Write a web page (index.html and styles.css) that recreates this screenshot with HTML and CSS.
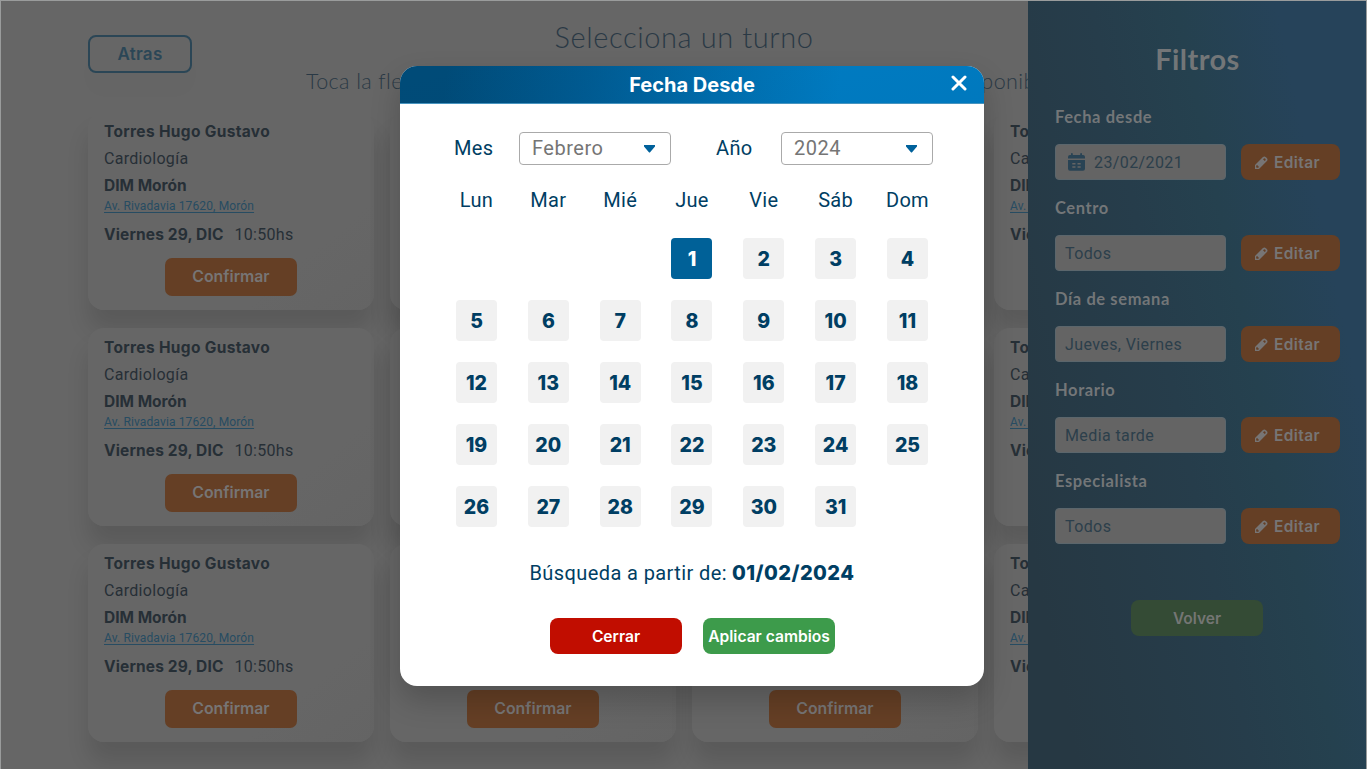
FILE: index.html
```html
<!DOCTYPE html>
<html lang="es">
<head>
<meta charset="utf-8">
<title>Selecciona un turno</title>
<link rel="stylesheet" href="styles.css">
</head>
<body>
<svg width="0" height="0" class="sprite" aria-hidden="true">
  <symbol id="pencil" viewBox="0 0 13 13">
    <path fill-rule="evenodd" d="M0 13V9L7.7 1.3Q9.300-.3 10.900 1.200L11.800 2.100Q13.300 3.700 11.700 5.300L4 13ZM8.600 2.700L8 3.300L9.700 5L10.300 4.400Q11.100 3.600 10.300 2.700Q9.500 1.900 8.600 2.700ZM1.200 9.700V11.300L1.700 11.800H3.300L3.700 11.300V10.200H2.800V9.300H1.600Z"/>
  </symbol>
  <symbol id="calendar" viewBox="0 0 17 18">
    <path fill-rule="evenodd" d="M0 5.500V4Q0 2 2 2H3V.7Q3 0 3.900 0T4.800.7V2H12.200V.7Q12.200 0 13.100 0T14 .7V2H15Q17 2 17 4V5.500ZM0 7H17V15.800Q17 17.800 15 17.800H2Q0 17.800 0 15.800ZM4.300 10V11.500H7.500V10ZM9.500 10V11.500H12.700V10ZM4.300 13.200V14.700H7.500V13.200ZM9.500 13.200V14.700H12.700V13.200Z"/>
  </symbol>
</svg>
<div class="page">
  <main class="main">
    <header class="top">
      <button class="back">Atras</button>
      <div class="heading">
        <h1 class="title">Selecciona un turno</h1>
        <p class="subtitle"><span>Toca la flecha</span><span>disponibles</span></p>
      </div>
    </header>
    <section class="cards" id="cards"></section>
  </main>
  <aside class="sidebar">
    <h2 class="sidebar-title">Filtros</h2>
    <div class="filters" id="filters"></div>
    <button class="volver">Volver</button>
  </aside>
  <section class="modal">
    <header class="modal-header">
      <h3 class="modal-title">Fecha Desde</h3>
      <svg class="close" viewBox="0 0 16 16"><path d="M2 2L14 14M14 2L2 14"/></svg>
    </header>
    <div class="selects">
      <span class="select-label">Mes</span>
      <div class="select"><span>Febrero</span><svg class="caret" viewBox="0 0 11 8"><path d="M0 0H11V1.500L6.300 7Q5.500 8 4.700 7L0 1.500Z"/></svg></div>
      <span class="select-label year">Año</span>
      <div class="select"><span>2024</span><svg class="caret" viewBox="0 0 11 8"><path d="M0 0H11V1.500L6.300 7Q5.500 8 4.700 7L0 1.500Z"/></svg></div>
    </div>
    <div class="weekdays"><span>Lun</span><span>Mar</span><span>Mié</span><span>Jue</span><span>Vie</span><span>Sáb</span><span>Dom</span></div>
    <div class="days" id="days"></div>
    <p class="summary"><span>Búsqueda a partir de:</span><b>01/02/2024</b></p>
    <div class="actions">
      <button class="action cerrar">Cerrar</button>
      <button class="action aplicar">Aplicar cambios</button>
    </div>
  </section>
</div>
<script src="app.js"></script>
</body>
</html>
```

FILE: styles.css
```css
* { box-sizing: border-box; margin: 0; }
body { background: #666; font-family: Roboto, "Liberation Sans", sans-serif; }
button { border: 0; font-family: Inter, sans-serif; font-weight: 600; padding: 0; white-space: nowrap; }
b { font-family: Inter, sans-serif; font-weight: 700; }
.sprite { position: absolute; }
.page { position: relative; width: 1367px; height: 769px; display: flex; overflow: hidden; border: 1px solid #9a9c9c; border-bottom: 0; background: #666; }
.main { width: 1027px; height: 768px; padding: 34px 0 0 87px; overflow: hidden; flex: none; }
.top { display: flex; height: 77px; }
.back { width: 104px; height: 38px; padding-bottom: 1px; flex: none; border: 2px solid #2b4656; border-radius: 8px; background: transparent; color: #2b4656; font-size: 17px; font-weight: 600; letter-spacing: .3px; box-shadow: 0 20px 20px rgba(0,0,0,.012); }
.heading { width: 756px; margin-left: 114px; flex: none; color: #2a3945; font-family: Lato, sans-serif; font-weight: 300; }
.title { margin-top: -16px; line-height: 36px; text-align: center; font-size: 29px; font-weight: 300; letter-spacing: .6px; }
.subtitle { display: flex; justify-content: space-between; margin-top: 12px; line-height: 28px; font-size: 21.5px; letter-spacing: .4px; }
.cards { display: grid; grid-template-columns: repeat(4, 286px); grid-auto-rows: 198px; gap: 18px 16px; width: max-content; }
.card { padding: 6px 16px; border-radius: 16px; background: linear-gradient(140deg, #666 75%, #646464); box-shadow: 0 20px 22px rgba(0,0,0,.12); color: #262f36; font-size: 16px; line-height: 27px; display: flex; flex-direction: column; align-items: flex-start; white-space: nowrap; }
.name, .place { font-family: Inter, sans-serif; font-weight: 700; font-size: 15.5px; letter-spacing: .33px; }
.place { letter-spacing: 0; }
.specialty { letter-spacing: .3px; }
.address { color: #274c62; font-size: 12px; line-height: 14px; letter-spacing: .13px; text-decoration: underline; text-underline-offset: 2px; }
.when { display: flex; gap: 11px; margin-top: 8px; }
.when b { font-size: 15.5px; letter-spacing: .14px; }
.hour { letter-spacing: .3px; }
.confirm { align-self: center; width: 132px; height: 38px; margin-top: 10px; padding-bottom: 1px; border-radius: 7px; background: #653f25; color: #777575; font-size: 15.8px; }
.sidebar { width: 338px; height: 768px; flex: none; padding: 39px 26px 0 27px; background: linear-gradient(78deg, #263843 10%, #263d4b 45%, #25414f 62%, #26435a 82%); color: #737678; }
.sidebar-title { text-align: center; font: 700 29px/38px Lato, sans-serif; letter-spacing: .4px; }
.filters { margin-top: 26px; }
.filter { height: 91px; }
.filter-label { font: 700 16.5px/27px Lato, sans-serif; letter-spacing: .6px; }
.filter-row { display: flex; gap: 15px; margin-top: 13px; }
.field { display: flex; align-items: center; width: 171px; height: 36px; padding: 0 9px; border-radius: 4px; background: #646464; border: 1px solid #5b666c; color: #2c3f4b; font-size: 16px; letter-spacing: .4px; }
.calendar { width: 17px; height: 18px; margin: 0 9px 0 3px; fill: #294354; }
.edit { display: flex; align-items: center; width: 99px; height: 36px; padding-left: 14px; gap: 6px; border-radius: 8px; background: #653f25; color: #777575; font-size: 15.5px; letter-spacing: .4px; }
.pencil { width: 13px; height: 13px; fill: #777575; }
.volver { display: block; width: 132px; height: 36px; margin: 41px 0 0 76px; border-radius: 8px; background: #344b35; color: #747674; font-size: 15.5px; }
.modal { position: absolute; left: 399px; top: 65px; width: 584px; height: 620px; border-radius: 17px; background: #fff; box-shadow: 0 14px 30px rgba(0,0,0,.2); color: #003e63; font-size: 20px; }
.modal-header { position: relative; height: 38px; border-radius: 17px 17px 0 0; border-bottom: 1px solid #4794bf; background: linear-gradient(165deg, transparent, rgba(0,50,90,.06)), linear-gradient(97deg, #004b78 8%, #005b92 32%, #006eae 55%, #007dc4 75%); }
.modal-title { color: #fff; text-align: center; font: 700 20px/38px Inter, sans-serif; }
.close { position: absolute; right: 17px; top: 9px; width: 16px; height: 16px; fill: none; stroke: #fff; stroke-width: 3; stroke-linecap: round; }
.selects { display: flex; align-items: center; margin: 28px 0 0 54px; height: 33px; letter-spacing: .35px; }
.select-label, .select span { position: relative; top: -1px; }
.select-label { width: 65px; }
.select-label.year { margin-left: 45px; }
.select { display: flex; align-items: center; justify-content: space-between; width: 152px; height: 33px; padding: 0 15px 0 12px; border: 1px solid #aaa; border-radius: 4px; color: #757575; letter-spacing: .5px; }
.caret { width: 11px; height: 8px; fill: #00619b; }
.weekdays, .days { display: grid; grid-template-columns: repeat(7, 41px); justify-content: space-between; width: 472px; margin-left: 56px; }
.weekdays { margin-top: 22px; line-height: 26px; letter-spacing: .3px; }
.weekdays span { justify-self: center; }
.days { margin-top: 25px; row-gap: 21px; }
.day { display: flex; align-items: center; justify-content: center; height: 41px; border-radius: 4px; background: #f1f1f1; font: 800 19.5px Inter, sans-serif; }
.day.first { grid-column: 4; background: #006198; color: #fff; }
.summary { display: flex; justify-content: center; gap: 5px; margin-top: 33px; line-height: 26px; letter-spacing: .4px; }
.summary b { font-weight: 800; letter-spacing: .45px; }
.actions { display: flex; gap: 21px; margin: 32px 0 0 150px; }
.action { width: 132px; height: 36px; border-radius: 8px; color: #fff; font-size: 15.6px; }
.cerrar { background: #c10d00; }
.aplicar { background: #3d9b4b; }
```

FILE: app.js
```js
const card = `<article class="card">
  <span class="name">Torres Hugo Gustavo</span>
  <span class="specialty">Cardiología</span>
  <span class="place">DIM Morón</span>
  <a class="address">Av. Rivadavia 17620, Morón</a>
  <div class="when"><b>Viernes 29, DIC</b><span class="hour">10:50hs</span></div>
  <button class="confirm">Confirmar</button>
</article>`;
document.getElementById('cards').innerHTML = card.repeat(12);

const filters = [['Fecha desde', '23/02/2021'], ['Centro', 'Todos'], ['Día de semana', 'Jueves, Viernes'], ['Horario', 'Media tarde'], ['Especialista', 'Todos']];
document.getElementById('filters').innerHTML = filters.map(([label, value], i) => `<div class="filter">
  <div class="filter-label">${label}</div>
  <div class="filter-row">
    <div class="field">${i === 0 ? '<svg class="calendar" viewBox="0 0 17 18"><use href="#calendar"/></svg>' : ''}<span>${value}</span></div>
    <button class="edit"><svg class="pencil"><use href="#pencil"/></svg><span>Editar</span></button>
  </div>
</div>`).join('');

document.getElementById('days').innerHTML = Array.from({ length: 31 }, (_, i) => `<div class="day${i === 0 ? ' first' : ''}">${i + 1}</div>`).join('');
```
